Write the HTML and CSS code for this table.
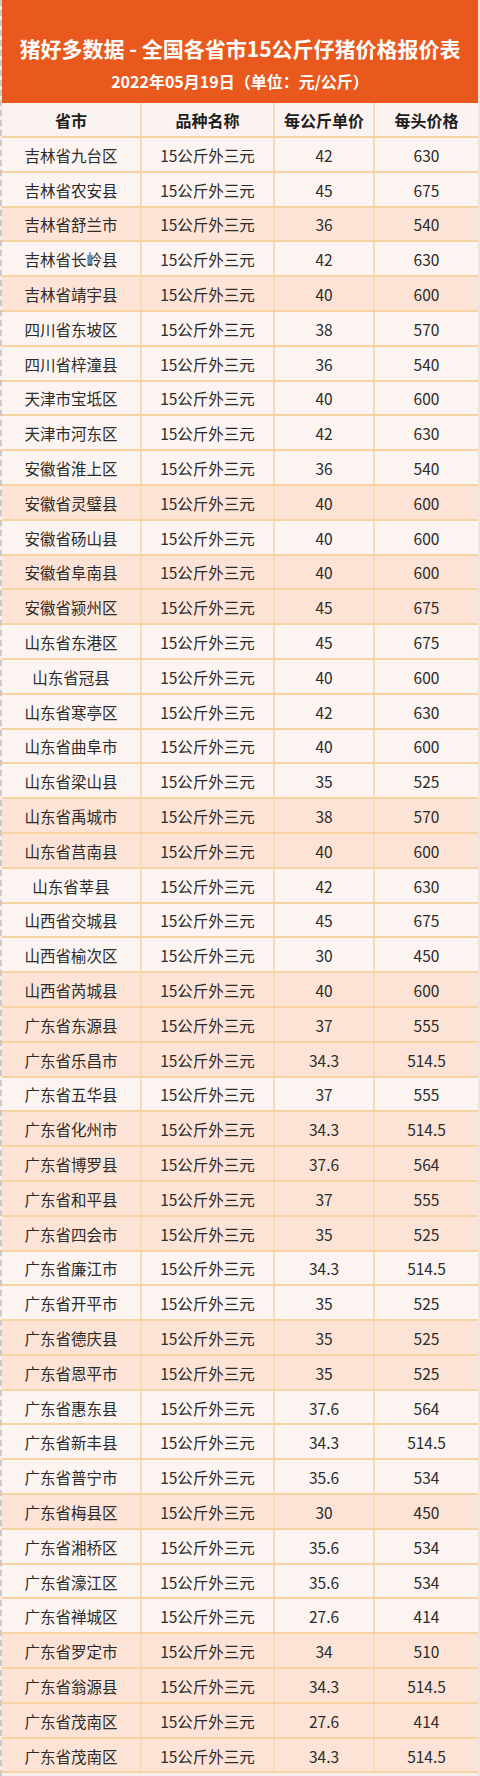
FILE: index.html
```html
<!DOCTYPE html>
<html lang="zh-CN">
<head>
<meta charset="utf-8">
<title>猪好多数据 - 全国各省市15公斤仔猪价格报价表</title>
<link rel="stylesheet" href="styles.css">
</head>
<body>
<div class="page">
  <header class="banner">
    <h1 class="title">猪好多数据 - 全国各省市15公斤仔猪价格报价表</h1>
    <p class="subtitle">2022年05月19日（单位：元/公斤）</p>
  </header>
  <div class="table">
    <div class="row head"><div class="cell">省市</div><div class="cell">品种名称</div><div class="cell">每公斤单价</div><div class="cell">每头价格</div></div>
    <div class="row"><div class="cell">吉林省九台区</div><div class="cell">15公斤外三元</div><div class="cell">42</div><div class="cell">630</div></div>
    <div class="row"><div class="cell">吉林省农安县</div><div class="cell">15公斤外三元</div><div class="cell">45</div><div class="cell">675</div></div>
    <div class="row pink"><div class="cell">吉林省舒兰市</div><div class="cell">15公斤外三元</div><div class="cell">36</div><div class="cell">540</div></div>
    <div class="row"><div class="cell">吉林省长岭县</div><div class="cell">15公斤外三元</div><div class="cell">42</div><div class="cell">630</div></div>
    <div class="row pink"><div class="cell">吉林省靖宇县</div><div class="cell">15公斤外三元</div><div class="cell">40</div><div class="cell">600</div></div>
    <div class="row"><div class="cell">四川省东坡区</div><div class="cell">15公斤外三元</div><div class="cell">38</div><div class="cell">570</div></div>
    <div class="row"><div class="cell">四川省梓潼县</div><div class="cell">15公斤外三元</div><div class="cell">36</div><div class="cell">540</div></div>
    <div class="row"><div class="cell">天津市宝坻区</div><div class="cell">15公斤外三元</div><div class="cell">40</div><div class="cell">600</div></div>
    <div class="row"><div class="cell">天津市河东区</div><div class="cell">15公斤外三元</div><div class="cell">42</div><div class="cell">630</div></div>
    <div class="row"><div class="cell">安徽省淮上区</div><div class="cell">15公斤外三元</div><div class="cell">36</div><div class="cell">540</div></div>
    <div class="row pink"><div class="cell">安徽省灵璧县</div><div class="cell">15公斤外三元</div><div class="cell">40</div><div class="cell">600</div></div>
    <div class="row"><div class="cell">安徽省砀山县</div><div class="cell">15公斤外三元</div><div class="cell">40</div><div class="cell">600</div></div>
    <div class="row pink"><div class="cell">安徽省阜南县</div><div class="cell">15公斤外三元</div><div class="cell">40</div><div class="cell">600</div></div>
    <div class="row pink"><div class="cell">安徽省颍州区</div><div class="cell">15公斤外三元</div><div class="cell">45</div><div class="cell">675</div></div>
    <div class="row"><div class="cell">山东省东港区</div><div class="cell">15公斤外三元</div><div class="cell">45</div><div class="cell">675</div></div>
    <div class="row"><div class="cell">山东省冠县</div><div class="cell">15公斤外三元</div><div class="cell">40</div><div class="cell">600</div></div>
    <div class="row"><div class="cell">山东省寒亭区</div><div class="cell">15公斤外三元</div><div class="cell">42</div><div class="cell">630</div></div>
    <div class="row"><div class="cell">山东省曲阜市</div><div class="cell">15公斤外三元</div><div class="cell">40</div><div class="cell">600</div></div>
    <div class="row"><div class="cell">山东省梁山县</div><div class="cell">15公斤外三元</div><div class="cell">35</div><div class="cell">525</div></div>
    <div class="row pink"><div class="cell">山东省禹城市</div><div class="cell">15公斤外三元</div><div class="cell">38</div><div class="cell">570</div></div>
    <div class="row pink"><div class="cell">山东省莒南县</div><div class="cell">15公斤外三元</div><div class="cell">40</div><div class="cell">600</div></div>
    <div class="row"><div class="cell">山东省莘县</div><div class="cell">15公斤外三元</div><div class="cell">42</div><div class="cell">630</div></div>
    <div class="row"><div class="cell">山西省交城县</div><div class="cell">15公斤外三元</div><div class="cell">45</div><div class="cell">675</div></div>
    <div class="row"><div class="cell">山西省榆次区</div><div class="cell">15公斤外三元</div><div class="cell">30</div><div class="cell">450</div></div>
    <div class="row pink"><div class="cell">山西省芮城县</div><div class="cell">15公斤外三元</div><div class="cell">40</div><div class="cell">600</div></div>
    <div class="row pink"><div class="cell">广东省东源县</div><div class="cell">15公斤外三元</div><div class="cell">37</div><div class="cell">555</div></div>
    <div class="row pink"><div class="cell">广东省乐昌市</div><div class="cell">15公斤外三元</div><div class="cell">34.3</div><div class="cell">514.5</div></div>
    <div class="row"><div class="cell">广东省五华县</div><div class="cell">15公斤外三元</div><div class="cell">37</div><div class="cell">555</div></div>
    <div class="row pink"><div class="cell">广东省化州市</div><div class="cell">15公斤外三元</div><div class="cell">34.3</div><div class="cell">514.5</div></div>
    <div class="row pink"><div class="cell">广东省博罗县</div><div class="cell">15公斤外三元</div><div class="cell">37.6</div><div class="cell">564</div></div>
    <div class="row pink"><div class="cell">广东省和平县</div><div class="cell">15公斤外三元</div><div class="cell">37</div><div class="cell">555</div></div>
    <div class="row pink"><div class="cell">广东省四会市</div><div class="cell">15公斤外三元</div><div class="cell">35</div><div class="cell">525</div></div>
    <div class="row"><div class="cell">广东省廉江市</div><div class="cell">15公斤外三元</div><div class="cell">34.3</div><div class="cell">514.5</div></div>
    <div class="row"><div class="cell">广东省开平市</div><div class="cell">15公斤外三元</div><div class="cell">35</div><div class="cell">525</div></div>
    <div class="row pink"><div class="cell">广东省德庆县</div><div class="cell">15公斤外三元</div><div class="cell">35</div><div class="cell">525</div></div>
    <div class="row pink"><div class="cell">广东省恩平市</div><div class="cell">15公斤外三元</div><div class="cell">35</div><div class="cell">525</div></div>
    <div class="row"><div class="cell">广东省惠东县</div><div class="cell">15公斤外三元</div><div class="cell">37.6</div><div class="cell">564</div></div>
    <div class="row"><div class="cell">广东省新丰县</div><div class="cell">15公斤外三元</div><div class="cell">34.3</div><div class="cell">514.5</div></div>
    <div class="row"><div class="cell">广东省普宁市</div><div class="cell">15公斤外三元</div><div class="cell">35.6</div><div class="cell">534</div></div>
    <div class="row pink"><div class="cell">广东省梅县区</div><div class="cell">15公斤外三元</div><div class="cell">30</div><div class="cell">450</div></div>
    <div class="row"><div class="cell">广东省湘桥区</div><div class="cell">15公斤外三元</div><div class="cell">35.6</div><div class="cell">534</div></div>
    <div class="row"><div class="cell">广东省濠江区</div><div class="cell">15公斤外三元</div><div class="cell">35.6</div><div class="cell">534</div></div>
    <div class="row"><div class="cell">广东省禅城区</div><div class="cell">15公斤外三元</div><div class="cell">27.6</div><div class="cell">414</div></div>
    <div class="row pink"><div class="cell">广东省罗定市</div><div class="cell">15公斤外三元</div><div class="cell">34</div><div class="cell">510</div></div>
    <div class="row pink"><div class="cell">广东省翁源县</div><div class="cell">15公斤外三元</div><div class="cell">34.3</div><div class="cell">514.5</div></div>
    <div class="row pink"><div class="cell">广东省茂南区</div><div class="cell">15公斤外三元</div><div class="cell">27.6</div><div class="cell">414</div></div>
    <div class="row pink"><div class="cell">广东省茂南区</div><div class="cell">15公斤外三元</div><div class="cell">34.3</div><div class="cell">514.5</div></div>
  </div>
</div>
</body>
</html>
```

FILE: styles.css
```css
* { box-sizing: border-box; }
html, body {
  margin: 0;
  padding: 0;
  background: #f4efec;
}
body {
  font-family: "Noto Sans CJK SC", "Noto Sans", sans-serif;
  color: #2b2b2b;
}
.page {
  width: 480px;
  height: 1776px;
  overflow: hidden;
  border-left: 2px dashed #cfc9c6;
  border-right: 2px solid #efe4de;
}
.banner {
  height: 103px;
  background: #e9591d;
  color: #fff;
  display: flex;
  flex-direction: column;
  align-items: center;
  padding-top: 33px;
}
.title {
  margin: 0;
  font-size: 21px;
  line-height: 30px;
  font-weight: 700;
  white-space: nowrap;
}
.subtitle {
  margin: 7px 0 0;
  font-size: 16px;
  line-height: 22px;
  font-weight: 700;
  white-space: nowrap;
}
.table {
  display: flex;
  flex-direction: column;
}
.row {
  display: grid;
  grid-template-columns: 140px 133px 100px 1fr;
  height: 34.8px;
  background: #fbf4f1;
  border-bottom: 2px solid #f7d3a2;
}
.row.pink { background: #fce3d5; }
.row.head {
  height: 35px;
  background: #fbf3ef;
  font-weight: 700;
  color: #1e1e1e;
}
.cell {
  display: flex;
  align-items: center;
  justify-content: center;
  font-size: 15.5px;
  line-height: 20px;
  white-space: nowrap;
  border-right: 2px solid #f6dcb8;
  padding-top: 1px;
}
.cell:last-child { border-right: none; }
.head .cell { font-size: 16px; }
```
